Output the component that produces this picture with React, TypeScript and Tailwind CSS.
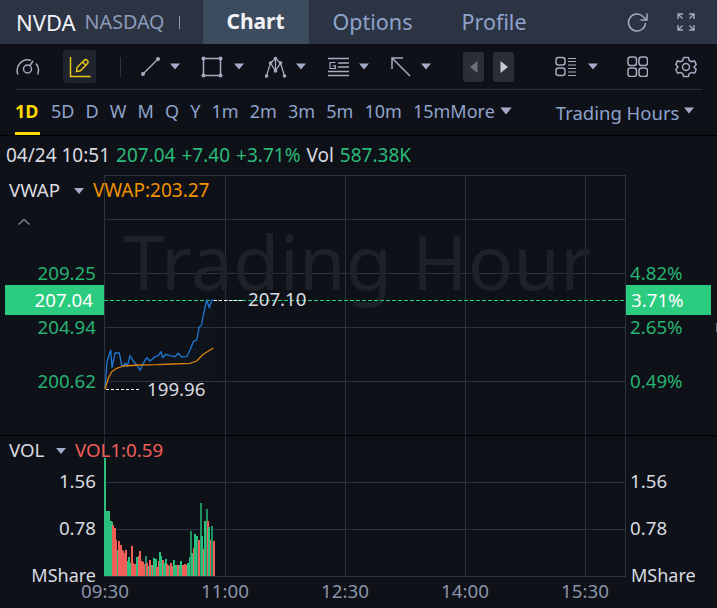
import React from "react";

const Caret = ({ w = 10, h = 7, fill = "#a3abc9" }: { w?: number; h?: number; fill?: string }) => (
  <svg width={w} height={h} viewBox="0 0 10 7" className="shrink-0">
    <path d="M0 0.5H10L5 6.5Z" fill={fill} />
  </svg>
);

const Ic = ({ children, w = 24, h = 24 }: { children: React.ReactNode; w?: number; h?: number }) => (
  <svg width={w} height={h} viewBox={`0 0 ${w} ${h}`} fill="none" stroke="#a5abc0" strokeWidth="1.5" className="shrink-0">
    {children}
  </svg>
);

const timeframes = ["5D", "D", "W", "M", "Q", "Y", "1m", "2m", "3m", "5m", "10m", "15m"];

const G = "#2bc07e";
const R = "#ef5f58";
const D = "#1f8f5f";
// [height, colour] for each volume bar, read left to right
const bars: [number, string][] = [
  [118, G], [65, G], [65, G], [65, G], [55, G], [54, G], [51, R], [48, R], [36, R], [26, G], [35, R], [31, R], [26, R], [25, R],
  [23, R], [26, R], [15, G], [19, G], [13, G], [30, R], [13, R], [12, R], [11, R], [19, G], [20, R], [25, R], [15, R], [14, R],
  [12, R], [20, D], [13, R], [10, G], [16, R], [11, G], [11, R], [18, G], [17, G], [9, R], [15, R], [24, G], [20, G], [16, R],
  [13, G], [17, G], [12, R], [11, R], [10, G], [13, R], [10, R], [16, G], [11, G], [11, G], [11, R], [11, G], [15, G], [11, R],
  [9, R], [12, R], [11, R], [13, G], [19, G], [45, D], [23, G], [28, R], [42, G], [40, G], [36, D], [36, R], [73, D], [40, G], [27, R],
  [55, G], [67, D], [55, R], [49, G], [36, R], [50, D], [35, R],
];

const blue = "105,388 107,362 110.7,350 112,367.7 115,353 119.3,353 121.7,365 123.3,366.7 125,363 127.3,366 130,355.7 133.3,361 136.7,365 140,370.3 142.7,364.3 146.7,357.7 150,361 155,356.7 158.3,355.7 161,351.7 162.7,357.7 166,354.3 170,355.7 175,356.7 178.3,353.3 181.7,357 186.7,356.7 190,350 193.3,341.7 196.7,340 199.3,326.7 201.7,325 203.3,315 206.7,300 209.3,307.7 211.7,300.3 214,300";
const orange = "105,389 108.3,378.3 111.7,371.7 116.7,368.3 123.3,366 140,365 156.7,364.7 173.3,364 190,363.3 196.7,361 203.3,354.3 213.3,348";

const Chart = () => (
  <svg viewBox="0 175 717 433" className="block h-[433px] w-[717px]" fontSize="18.7">
    {/* grid */}
    <g stroke="#2b3240" strokeWidth="1" shapeRendering="crispEdges">
      {[175, 219, 273, 327, 381, 482, 529, 576].map((y) => (
        <line key={y} x1="104" x2="625" y1={y + 0.5} y2={y + 0.5} />
      ))}
      {[104, 225, 345, 465, 585, 625].map((x) => (
        <line key={x} x1={x + 0.5} x2={x + 0.5} y1="175" y2="577" />
      ))}
    </g>
    <rect x="0" y="435" width="717" height="1" fill="#000" shapeRendering="crispEdges" />

    {/* watermark */}
    <text x="357" y="290" fontSize="75.5" fill="#1d2128" textAnchor="middle">Trading Hour</text>

    {/* volume */}
    <g shapeRendering="crispEdges">
      {bars.map(([h, c], i) => (
        <rect key={i} x={Math.floor(104.5 + i * 1.41)} y={576 - h} width="2" height={h} fill={c} />
      ))}
    </g>

    {/* price */}
    <polygon points={`${blue} 214,381 105,381`} fill="#1668b8" opacity="0.03" />
    <line x1="104" x2="625" y1="300.5" y2="300.5" stroke="#2bcb80" strokeDasharray="4 2" shapeRendering="crispEdges" />
    <polyline points={blue} fill="none" stroke="#1f78d1" strokeWidth="1.3" strokeLinejoin="round" />
    <polyline points={orange} fill="none" stroke="#d9820c" strokeWidth="1.3" strokeLinejoin="round" />
    <line x1="106" x2="140" y1="389.5" y2="389.5" stroke="#fff" strokeDasharray="3 2" shapeRendering="crispEdges" />
    <line x1="214" x2="242" y1="300.5" y2="300.5" stroke="#fff" strokeDasharray="3 2" shapeRendering="crispEdges" />
    <text x="147" y="396" fill="#d9dbe0">199.96</text>
    <text x="248" y="306" fill="#d9dbe0">207.10</text>

    {/* legends */}
    <text x="9" y="197" fill="#d9dbe0">VWAP</text>
    <path d="M74 188H84L79 194Z" fill="#a3abc9" />
    <text x="93" y="197" fill="#f29100" fontSize="19">VWAP:203.27</text>
    <path d="M18.500 224.500L24 219.500L29.500 224.500" fill="none" stroke="#7d8499" strokeWidth="1.5" />
    <text x="9" y="457" fill="#d9dbe0">VOL</text>
    <path d="M56 448H66L61 454Z" fill="#a3abc9" />
    <text x="75" y="457" fill={R}>VOL1:0.59</text>

    {/* left axis */}
    <g textAnchor="end" fill="#27b273">
      <text x="96" y="280">209.25</text>
      <text x="96" y="334">204.94</text>
      <text x="96" y="388">200.62</text>
    </g>
    <rect x="5" y="285" width="99" height="30" fill="#2bcb80" />
    <text x="93" y="307" fill="#fff" textAnchor="end">207.04</text>

    {/* right axis */}
    <g fill="#27b273">
      <text x="630" y="280">4.82%</text>
      <text x="630" y="334">2.65%</text>
      <text x="630" y="388">0.49%</text>
    </g>
    <rect x="626" y="285" width="85" height="30" fill="#2bcb80" />
    <text x="631" y="307" fill="#fff">3.71%</text>
    <rect x="716" y="323" width="1" height="9" fill="#6b7180" />

    {/* volume axes */}
    <g textAnchor="end" fill="#d9dbe0">
      <text x="96" y="488">1.56</text>
      <text x="96" y="535">0.78</text>
      <text x="96" y="582" fontSize="18">MShare</text>
    </g>
    <g fill="#d9dbe0">
      <text x="630" y="488">1.56</text>
      <text x="630" y="535">0.78</text>
      <text x="631" y="582" fontSize="18">MShare</text>
    </g>

    {/* time axis */}
    <g textAnchor="middle" fill="#8d94ab">
      <text x="105" y="598">09:30</text>
      <text x="225" y="598">11:00</text>
      <text x="345" y="598">12:30</text>
      <text x="465" y="598">14:00</text>
      <text x="585" y="598">15:30</text>
    </g>
  </svg>
);

export default function App() {
  return (
    <div className="h-[608px] w-[717px] overflow-hidden bg-[#0e1117] font-['Noto_Sans',sans-serif]">
      {/* header */}
      <div className="flex h-[44px] items-center bg-[#2c3444] text-[21.5px]">
        <span className="ml-[16px] text-[22px] text-[#f0f2f6]">NVDA</span>
        <span className="ml-[9px] text-[19.7px] text-[#8d9ab8]">NASDAQ</span>
        <span className="ml-[14px] h-[13px] w-px bg-[#8d9ab8]" />
        <div className="ml-[23px] flex h-full w-[106px] items-center justify-center bg-[#3d4b5e] text-[21px] font-bold text-[#f0f2f6]">Chart</div>
        <div className="ml-[24px] text-[#8fa3cc]">Options</div>
        <div className="ml-[49px] text-[#8fa3cc]">Profile</div>
        <div className="ml-[99px]">
          <Ic w={24} h={24}>
            <path d="M19.500 13A8.500 8.500 0 1 1 17 6.500L20.500 9.500" />
            <path d="M21 3.500V10H14.500" />
          </Ic>
        </div>
        <div className="ml-[26px]">
          <Ic w={20} h={20}>
            <path d="M2 7V2H7M1.500 1.500L6.500 6.500M13 2H18V7M18.500 1.500L13.500 6.500M2 13V18H7M1.500 18.500L6.500 13.500M13 18H18V13M18.500 18.500L13.500 13.500" strokeWidth="1.400" />
          </Ic>
        </div>
      </div>

      {/* drawing toolbar */}
      <div className="mx-[15px] flex h-[46px] items-center border-b border-[#2b2f3a]">
        <Ic w={25} h={20}>
          <path d="M3 17.500A10.500 10.500 0 0 1 16 3.500M21 6.500A10.500 10.500 0 0 1 22.500 17.500" />
          <circle cx="12.500" cy="12" r="4" />
          <path d="M15 8.500L18 4" />
        </Ic>
        <div className="ml-[23px] flex h-[33px] w-[33px] items-center justify-center rounded-[3px] bg-[#1f232b]">
          <svg width="22" height="22" viewBox="0 0 22 22" fill="none" stroke="#e8c51b" strokeWidth="1.500">
            <path d="M1.500 1V20.500H21.500" />
            <path d="M7.500 15.500L8 11.500L15 4.500A1.800 1.800 0 0 1 18.500 7.500L11.500 14.800Z" />
            <path d="M13.500 6L16.800 9.200" />
          </svg>
        </div>
        <span className="ml-[24px] h-[20px] w-px bg-[#2f3440]" />
        <div className="ml-[19px]">
          <Ic w={21} h={21}>
            <path d="M3 18L18 3" />
            <circle cx="3" cy="18" r="2" fill="#a5abc0" stroke="none" />
            <circle cx="18" cy="3" r="2" fill="#a5abc0" stroke="none" />
          </Ic>
        </div>
        <div className="ml-[9px]"><Caret /></div>
        <div className="ml-[21px]">
          <Ic w={22} h={22}>
            <rect x="2.500" y="2.500" width="17" height="17" />
            {[[2.5, 2.5], [19.5, 2.5], [2.5, 19.5], [19.5, 19.5]].map(([x, y]) => (
              <circle key={`${x}-${y}`} cx={x} cy={y} r="2" fill="#a5abc0" stroke="none" />
            ))}
          </Ic>
        </div>
        <div className="ml-[11px]"><Caret /></div>
        <div className="ml-[21px]">
          <Ic w={23} h={22}>
            <path d="M1.500 20L5.500 7L10.500 15L15.500 7L19.500 20M5.500 7L10.500 2.500L15.500 7M10.500 2.500V15" strokeWidth="1.300" />
            {[[1.5, 20], [5.5, 7], [10.5, 15], [10.5, 2.5], [15.5, 7], [19.5, 20]].map(([x, y]) => (
              <circle key={`${x}-${y}`} cx={x} cy={y} r="1.800" fill="#a5abc0" stroke="none" />
            ))}
          </Ic>
        </div>
        <div className="ml-[8px]"><Caret /></div>
        <div className="ml-[22px]">
          <Ic w={22} h={21}>
            <path d="M0 2.500H21M10 7H21M10 11H21M0 15.500H21M0 19.500H21" strokeWidth="1.300" />
            <path d="M7.500 6.500H2V12.500H7.500V9.800H4.800" strokeWidth="1.200" />
          </Ic>
        </div>
        <div className="ml-[9px]"><Caret /></div>
        <div className="ml-[21px]">
          <Ic w={21} h={21}>
            <path d="M2 2L20 20M2 13V2H13" />
          </Ic>
        </div>
        <div className="ml-[10px]"><Caret /></div>
        <div className="ml-[32px] flex h-[30px] w-[21px] items-center justify-center rounded-[3px] bg-[#2a2e36]">
          <svg width="8" height="12" viewBox="0 0 8 12"><path d="M7.500 0V12L0 6Z" fill="#6d717a" /></svg>
        </div>
        <div className="ml-[9px] flex h-[30px] w-[21px] items-center justify-center rounded-[3px] bg-[#2a2e36]">
          <svg width="8" height="12" viewBox="0 0 8 12"><path d="M0.500 0V12L8 6Z" fill="#c5c9d6" /></svg>
        </div>
        <div className="ml-[41px]">
          <Ic w={22} h={21}>
            <rect x="1" y="1.500" width="9" height="7.500" rx="2.500" />
            <rect x="1" y="12" width="9" height="7.500" rx="2.500" />
            <path d="M13 2.500H21M13 5.500H21M13 9H21M13 12.500H21M13 16H21M13 19.500H21" strokeWidth="1.200" />
          </Ic>
        </div>
        <div className="ml-[11px]"><Caret /></div>
        <div className="ml-[29px]">
          <Ic w={21} h={21}>
            <rect x="1" y="1" width="8.500" height="8.500" rx="2.500" />
            <rect x="12" y="1" width="8.500" height="8.500" rx="2.500" />
            <rect x="1" y="12" width="8.500" height="8.500" rx="2.500" />
            <rect x="12" y="12" width="8.500" height="8.500" rx="2.500" />
          </Ic>
        </div>
        <div className="ml-[27px]">
          <Ic w={22} h={22}>
            <path d="M8.600 1.500H13.400L14.200 4.500L16.700 5.700L19.500 4.800L21.200 8.600L19 11L19.100 11.300L21.200 13.500L19.500 17.300L16.700 16.400L14.200 17.600L13.400 20.500H8.600L7.800 17.600L5.300 16.400L2.500 17.300L0.800 13.500L3 11L0.800 8.600L2.500 4.800L5.300 5.700L7.800 4.500Z" strokeLinejoin="round" />
            <circle cx="11" cy="11" r="3.500" />
          </Ic>
        </div>
      </div>

      {/* timeframes */}
      <div className="flex h-[46px] items-center border-b border-black pb-[2px] pl-[15px] text-[18px] text-[#8fa3cc]">
        <div className="relative flex h-full items-center">
          <span className="font-bold text-[#ffd900]">1D</span>
          <span className="absolute -bottom-[2px] left-0 h-[3px] w-[25px] bg-[#ffd900]" />
        </div>
        <div className="ml-[12.5px] flex gap-[11.1px]">
          {timeframes.map((t) => (
            <span key={t}>{t}</span>
          ))}
        </div>
        <span>More</span>
        <div className="ml-[5px] -translate-y-px"><Caret w={12} h={8} /></div>
        <span className="ml-[44px] translate-y-px text-[18.5px]">Trading Hours</span>
        <div className="ml-[5px] -translate-y-px"><Caret /></div>
      </div>

      {/* quote */}
      <div className="flex h-[39px] items-center gap-[6px] pl-[6px] text-[19px] text-[#d9dbe0]">
        <span>04/24 10:51</span>
        <span className="text-[#2bba7a]">207.04</span>
        <span className="text-[#2bba7a]">+7.40</span>
        <span className="text-[#2bba7a]">+3.71%</span>
        <span>Vol</span>
        <span className="text-[#2bba7a]">587.38K</span>
      </div>

      <Chart />
    </div>
  );
}
